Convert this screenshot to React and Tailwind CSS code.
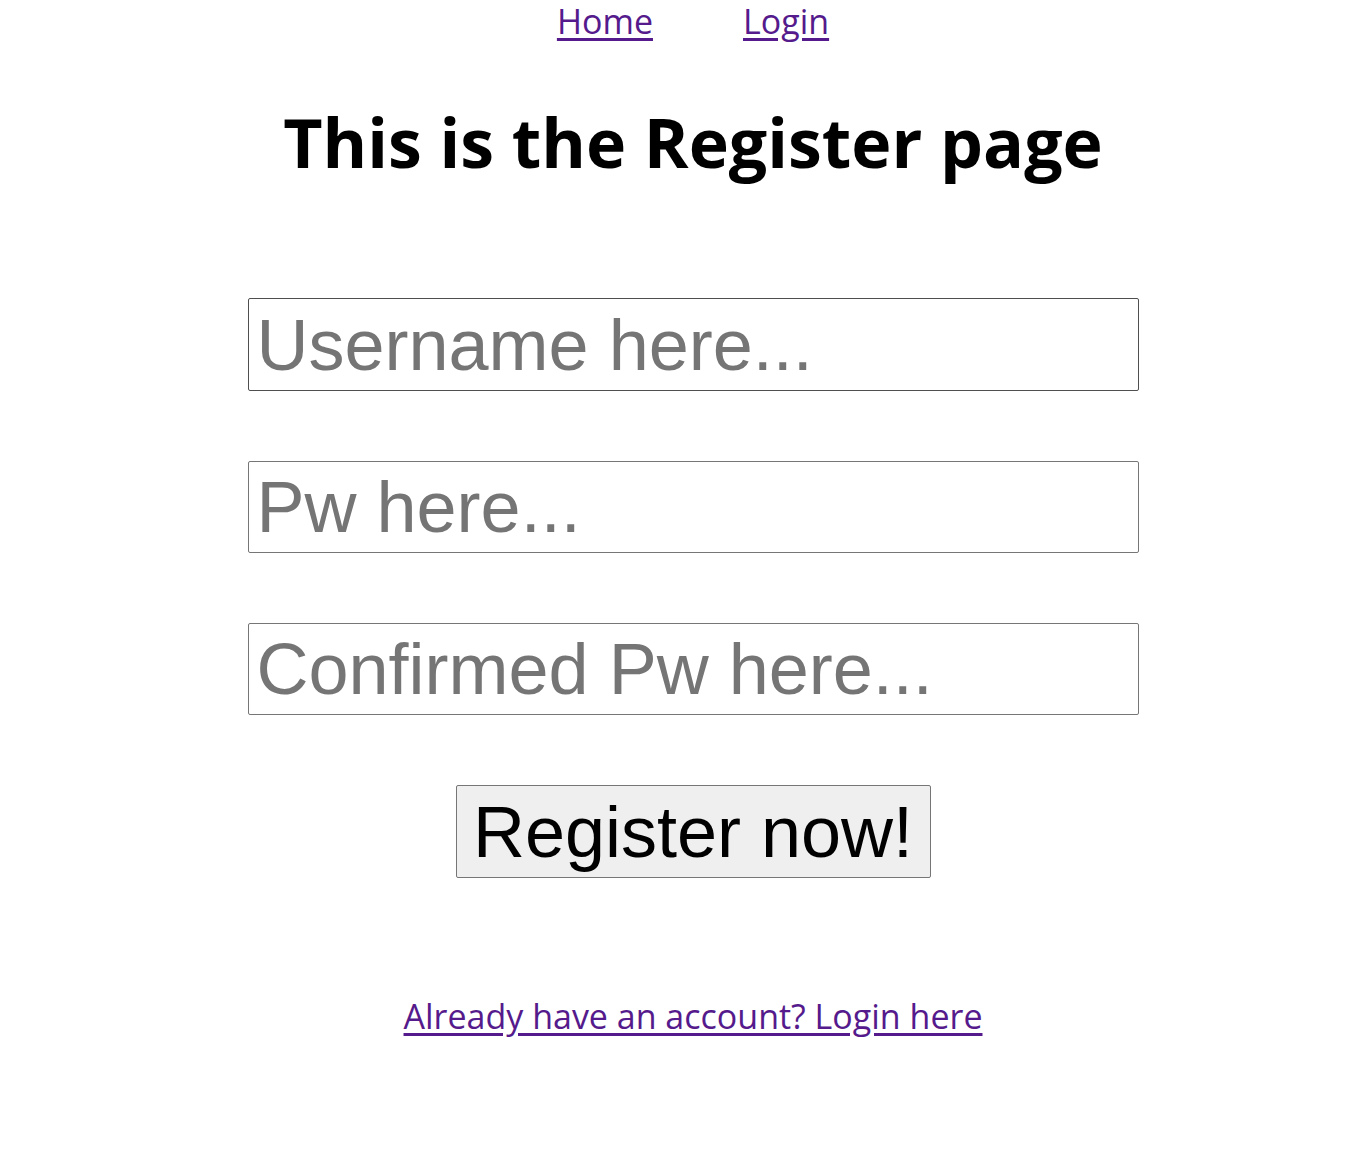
import { useState } from 'react';

function Register() {
  const [username, setUsername] = useState('');
  const [pw, setPw] = useState('');
  const [confirmPw, setConfirmPw] = useState('');

  const handleSubmit = (e) => {
    e.preventDefault();
  };

  return (
    <div className="min-h-[1150px] bg-white pl-5 font-['Open_Sans',sans-serif]">
      <nav className="flex justify-center gap-[90px] text-[34px] leading-[42px]">
        <a href="#" className="text-[#551a8b] underline underline-offset-[4px]">Home</a>
        <a href="#" className="text-[#551a8b] underline underline-offset-[4px]">Login</a>
      </nav>

      <h1 className="mt-[60px] text-center text-[68px] font-bold leading-[80px] text-black">
        This is the Register page
      </h1>

      <form onSubmit={handleSubmit} className="mt-[116px] flex flex-col items-center">
        <input
          type="text"
          value={username}
          onChange={(e) => setUsername(e.target.value)}
          placeholder="Username here..."
          className="h-[93px] w-[891px] rounded-[2px] border border-[#4f4f4f] px-[8px] font-['Liberation_Sans',Arial,sans-serif] text-[72px] placeholder:text-[#757575] outline-none"
        />
        <input
          type="password"
          value={pw}
          onChange={(e) => setPw(e.target.value)}
          placeholder="Pw here..."
          className="mt-[70px] h-[92px] w-[891px] rounded-[2px] border border-[#767676] px-[8px] font-['Liberation_Sans',Arial,sans-serif] text-[72px] placeholder:text-[#757575] outline-none"
        />
        <input
          type="password"
          value={confirmPw}
          onChange={(e) => setConfirmPw(e.target.value)}
          placeholder="Confirmed Pw here..."
          className="mt-[70px] h-[92px] w-[891px] rounded-[2px] border border-[#767676] px-[8px] font-['Liberation_Sans',Arial,sans-serif] text-[72px] placeholder:text-[#757575] outline-none"
        />
        <button
          type="submit"
          className="mt-[70px] h-[93px] w-[475px] rounded-[2px] border border-[#767676] bg-[#efefef] font-['Liberation_Sans',Arial,sans-serif] text-[72px] leading-none text-black"
        >
          Register now!
        </button>
      </form>

      <div className="mt-[120px] flex justify-center">
        <a href="#" className="text-[34px] leading-[36px] text-[#551a8b] underline underline-offset-[4px]">
          Already have an account? Login here
        </a>
      </div>
    </div>
  );
}

export default function App() {
  return <Register />;
}
